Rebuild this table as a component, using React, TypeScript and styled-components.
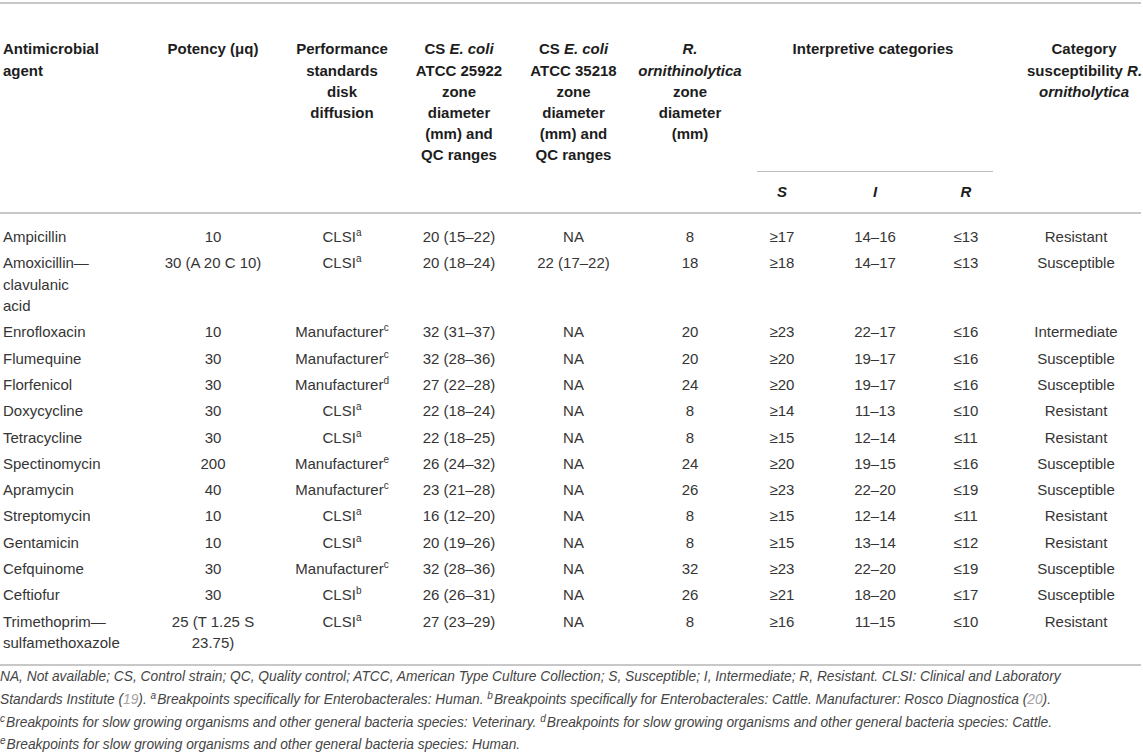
import React from "react";
import styled, { createGlobalStyle } from "styled-components";

const Global = createGlobalStyle`
  html, body { margin: 0; padding: 0; background: #ffffff; }
  body { font-family: "Liberation Sans", Arial, Helvetica, sans-serif; }
`;

const Page = styled.div`
  width: 1141px;
  padding-top: 2px;
`;

const Table = styled.table`
  width: 1141px;
  table-layout: fixed;
  border-collapse: separate;
  border-spacing: 0;
  border-top: 2px solid #c8c8c8;
  font-size: 15px;
`;

const HeadRow = styled.tr<{ $h: number }>`
  height: ${(p) => p.$h}px;
`;

const HeadCell = styled.th<{ $align?: string; $padLeft?: number; $ruled?: boolean }>`
  font-weight: bold;
  color: #1d1d1d;
  line-height: 21.2px;
  text-align: ${(p) => p.$align ?? "center"};
  vertical-align: top;
  padding: 34.4px 0 0 ${(p) => p.$padLeft ?? 0}px;
  white-space: nowrap;
  border-bottom: ${(p) => (p.$ruled ? "2px solid #c8c8c8" : "none")};
`;

const GroupCell = styled.th`
  font-weight: bold;
  color: #1d1d1d;
  line-height: 21.2px;
  text-align: center;
  vertical-align: top;
  padding: 34.4px 0 0 0;
  white-space: nowrap;
  background-image: linear-gradient(#bdbdbd, #bdbdbd);
  background-repeat: no-repeat;
  background-size: 236px 1px;
  background-position: 14px 100%;
`;

const SubCell = styled.th`
  font-weight: bold;
  font-style: italic;
  color: #1d1d1d;
  line-height: 21.2px;
  text-align: center;
  vertical-align: middle;
  padding: 0;
  border-bottom: 2px solid #c8c8c8;
`;

const BodyRow = styled.tr`
  &:first-child > td {
    padding-top: 12.4px;
  }
  &:last-child > td {
    padding-bottom: 10.5px;
    border-bottom: 2px solid #c8c8c8;
  }
`;

const Cell = styled.td<{ $left?: boolean; $padLeft?: number }>`
  padding: 2.4px 0 2.4px ${(p) => (p.$left ? 3 : p.$padLeft ?? 0)}px;
  line-height: 21.5px;
  text-align: ${(p) => (p.$left ? "left" : "center")};
  vertical-align: top;
  color: #353535;
  white-space: nowrap;
`;

const Sup = styled.sup`
  font-size: 10px;
  line-height: 0;
  vertical-align: 6px;
`;

const Notes = styled.div`
  padding-top: 0;
  font-size: 13.75px;
  line-height: 22.8px;
  font-style: italic;
  color: #454545;
  white-space: nowrap;
`;

const NoteLine = styled.div``;

const Ref = styled.span`
  color: #a3a3a3;
`;

const NoteSup = styled.sup`
  font-size: 10px;
  line-height: 0;
  vertical-align: 5px;
  margin-right: 1px;
`;

type Row = {
  agent: string[];
  potency: string[];
  std: [string, string];
  cs1: string;
  cs2: string;
  ro: string;
  s: string;
  i: string;
  r: string;
  cat: string;
};

const CLSI = (x: string): [string, string] => ["CLSI", x];
const MAN = (x: string): [string, string] => ["Manufacturer", x];

const rows: Row[] = [
  { agent: ["Ampicillin"], potency: ["10"], std: CLSI("a"), cs1: "20 (15–22)", cs2: "NA", ro: "8", s: "≥17", i: "14–16", r: "≤13", cat: "Resistant" },
  { agent: ["Amoxicillin—", "clavulanic", "acid"], potency: ["30 (A 20 C 10)"], std: CLSI("a"), cs1: "20 (18–24)", cs2: "22 (17–22)", ro: "18", s: "≥18", i: "14–17", r: "≤13", cat: "Susceptible" },
  { agent: ["Enrofloxacin"], potency: ["10"], std: MAN("c"), cs1: "32 (31–37)", cs2: "NA", ro: "20", s: "≥23", i: "22–17", r: "≤16", cat: "Intermediate" },
  { agent: ["Flumequine"], potency: ["30"], std: MAN("c"), cs1: "32 (28–36)", cs2: "NA", ro: "20", s: "≥20", i: "19–17", r: "≤16", cat: "Susceptible" },
  { agent: ["Florfenicol"], potency: ["30"], std: MAN("d"), cs1: "27 (22–28)", cs2: "NA", ro: "24", s: "≥20", i: "19–17", r: "≤16", cat: "Susceptible" },
  { agent: ["Doxycycline"], potency: ["30"], std: CLSI("a"), cs1: "22 (18–24)", cs2: "NA", ro: "8", s: "≥14", i: "11–13", r: "≤10", cat: "Resistant" },
  { agent: ["Tetracycline"], potency: ["30"], std: CLSI("a"), cs1: "22 (18–25)", cs2: "NA", ro: "8", s: "≥15", i: "12–14", r: "≤11", cat: "Resistant" },
  { agent: ["Spectinomycin"], potency: ["200"], std: MAN("e"), cs1: "26 (24–32)", cs2: "NA", ro: "24", s: "≥20", i: "19–15", r: "≤16", cat: "Susceptible" },
  { agent: ["Apramycin"], potency: ["40"], std: MAN("c"), cs1: "23 (21–28)", cs2: "NA", ro: "26", s: "≥23", i: "22–20", r: "≤19", cat: "Susceptible" },
  { agent: ["Streptomycin"], potency: ["10"], std: CLSI("a"), cs1: "16 (12–20)", cs2: "NA", ro: "8", s: "≥15", i: "12–14", r: "≤11", cat: "Resistant" },
  { agent: ["Gentamicin"], potency: ["10"], std: CLSI("a"), cs1: "20 (19–26)", cs2: "NA", ro: "8", s: "≥15", i: "13–14", r: "≤12", cat: "Resistant" },
  { agent: ["Cefquinome"], potency: ["30"], std: MAN("c"), cs1: "32 (28–36)", cs2: "NA", ro: "32", s: "≥23", i: "22–20", r: "≤19", cat: "Susceptible" },
  { agent: ["Ceftiofur"], potency: ["30"], std: CLSI("b"), cs1: "26 (26–31)", cs2: "NA", ro: "26", s: "≥21", i: "18–20", r: "≤17", cat: "Susceptible" },
  { agent: ["Trimethoprim—", "sulfamethoxazole"], potency: ["25 (T 1.25 S", "23.75)"], std: CLSI("a"), cs1: "27 (23–29)", cs2: "NA", ro: "8", s: "≥16", i: "11–15", r: "≤10", cat: "Resistant" },
];

const Lines = ({ parts }: { parts: string[] }) => (
  <>
    {parts.map((p, k) => (
      <React.Fragment key={k}>
        {k > 0 && <br />}
        {p}
      </React.Fragment>
    ))}
  </>
);

const widths = [150, 126, 132, 102, 127, 106, 78, 108, 74, 138];

export default function App() {
  return (
    <Page>
      <Global />
      <Table>
        <colgroup>
          {widths.map((w, k) => (
            <col key={k} style={{ width: w }} />
          ))}
        </colgroup>
        <thead>
          <HeadRow $h={167.5}>
            <HeadCell rowSpan={2} $align="left" $padLeft={3} $ruled>
              Antimicrobial
              <br />
              agent
            </HeadCell>
            <HeadCell rowSpan={2} $ruled>
              Potency (μq)
            </HeadCell>
            <HeadCell rowSpan={2} $ruled>
              Performance
              <br />
              standards
              <br />
              disk
              <br />
              diffusion
            </HeadCell>
            <HeadCell rowSpan={2} $ruled>
              CS <i>E. coli</i>
              <br />
              ATCC 25922
              <br />
              zone
              <br />
              diameter
              <br />
              (mm) and
              <br />
              QC ranges
            </HeadCell>
            <HeadCell rowSpan={2} $ruled>
              CS <i>E. coli</i>
              <br />
              ATCC 35218
              <br />
              zone
              <br />
              diameter
              <br />
              (mm) and
              <br />
              QC ranges
            </HeadCell>
            <HeadCell rowSpan={2} $ruled>
              <i>R.</i>
              <br />
              <i>ornithinolytica</i>
              <br />
              zone
              <br />
              diameter
              <br />
              (mm)
            </HeadCell>
            <GroupCell colSpan={3}>Interpretive categories</GroupCell>
            <HeadCell rowSpan={2} $ruled $padLeft={24}>
              Category
              <br />
              susceptibility <i>R.</i>
              <br />
              <i>ornitholytica</i>
            </HeadCell>
          </HeadRow>
          <HeadRow $h={42}>
            <SubCell>S</SubCell>
            <SubCell>I</SubCell>
            <SubCell>R</SubCell>
          </HeadRow>
        </thead>
        <tbody>
          {rows.map((r, k) => (
            <BodyRow key={k}>
              <Cell $left>
                <Lines parts={r.agent} />
              </Cell>
              <Cell>
                <Lines parts={r.potency} />
              </Cell>
              <Cell>
                {r.std[0]}
                <Sup>{r.std[1]}</Sup>
              </Cell>
              <Cell>{r.cs1}</Cell>
              <Cell>{r.cs2}</Cell>
              <Cell>{r.ro}</Cell>
              <Cell>{r.s}</Cell>
              <Cell>{r.i}</Cell>
              <Cell>{r.r}</Cell>
              <Cell $padLeft={8}>{r.cat}</Cell>
            </BodyRow>
          ))}
        </tbody>
      </Table>
      <Notes>
        <NoteLine>
          NA, Not available; CS, Control strain; QC, Quality control; ATCC, American Type Culture Collection; S,
          Susceptible; I, Intermediate; R, Resistant. CLSI: Clinical and Laboratory
        </NoteLine>
        <NoteLine>
          Standards Institute (<Ref>19</Ref>). <NoteSup>a</NoteSup>Breakpoints specifically for Enterobacterales:
          Human. <NoteSup>b</NoteSup>Breakpoints specifically for Enterobacterales: Cattle. Manufacturer: Rosco
          Diagnostica (<Ref>20</Ref>).
        </NoteLine>
        <NoteLine>
          <NoteSup>c</NoteSup>Breakpoints for slow growing organisms and other general bacteria species: Veterinary.{" "}
          <NoteSup>d</NoteSup>Breakpoints for slow growing organisms and other general bacteria species: Cattle.
        </NoteLine>
        <NoteLine>
          <NoteSup>e</NoteSup>Breakpoints for slow growing organisms and other general bacteria species: Human.
        </NoteLine>
      </Notes>
    </Page>
  );
}
